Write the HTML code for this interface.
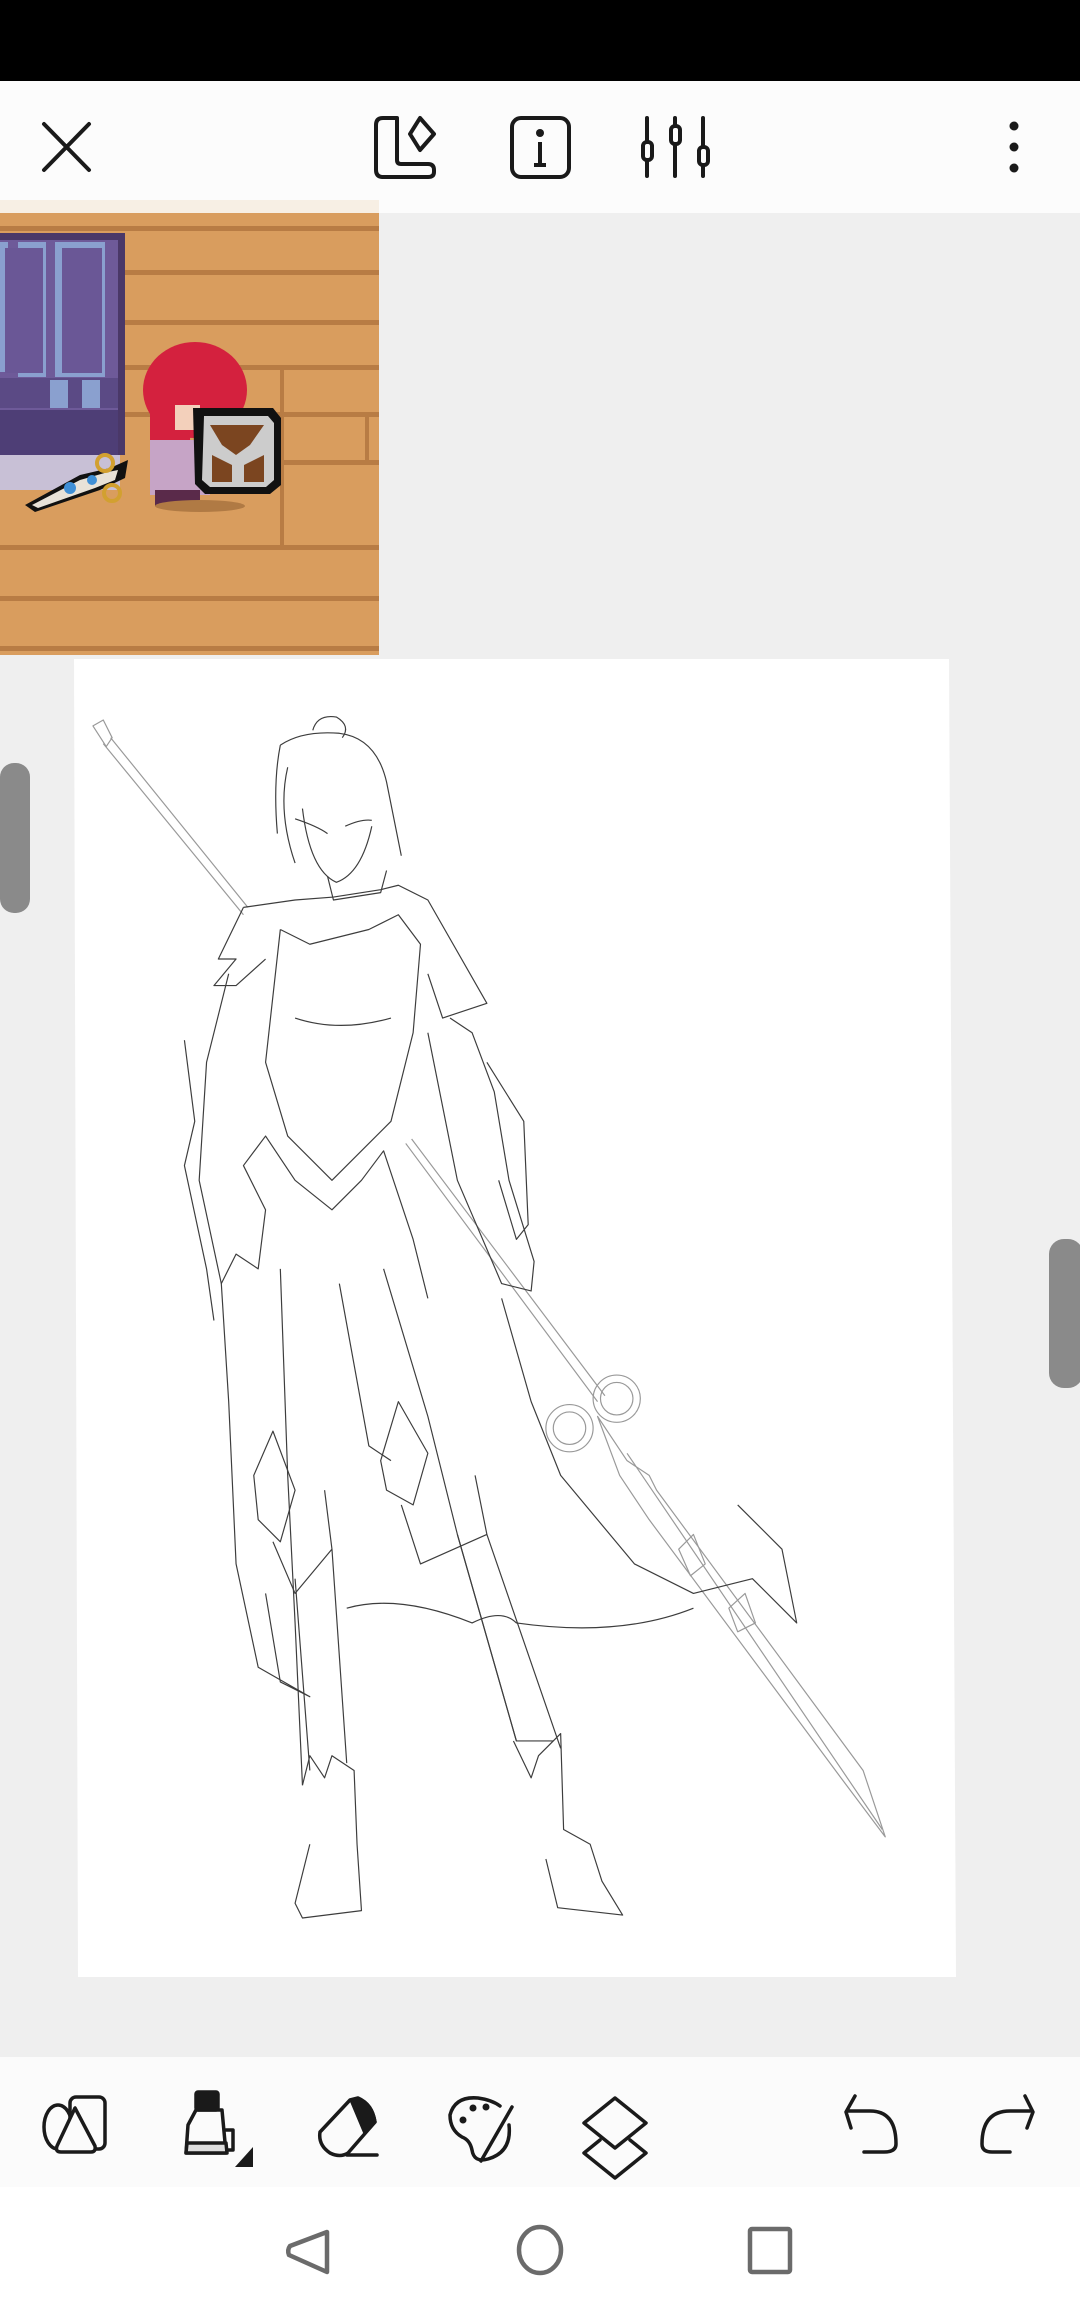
<!DOCTYPE html>
<html><head><meta charset="utf-8"><style>
html,body{margin:0;padding:0;width:1080px;height:2312px;overflow:hidden;background:#efefef;font-family:"Liberation Sans",sans-serif}
.abs{position:absolute}
</style></head><body>
<div class="abs" style="left:0;top:0;width:1080px;height:81px;background:#000"></div>
<div class="abs" style="left:0;top:81px;width:1080px;height:132px;background:#fcfcfc"></div>
<div class="abs" style="left:0;top:2057px;width:1080px;height:130px;background:#fbfbfb"></div>
<div class="abs" style="left:0;top:2187px;width:1080px;height:125px;background:#ffffff"></div>
<svg class="abs" style="left:0;top:0" width="1080" height="2312" viewBox="0 0 1080 2312">
<g fill="none" stroke="#1a1a1a" stroke-width="4" stroke-linecap="round" stroke-linejoin="round">
<path d="M44 124 L89 170 M89 124 L44 170"/>
<path d="M383 118 H397 V160 Q397 164 401 164 H428 Q434 164 434 170 V172 Q434 177 428 177 H383 Q376 177 376 170 V125 Q376 118 383 118 Z"/>
<path d="M420 118 L434 134 L420 150 L410 134 Z"/>
<rect x="512" y="118" width="57" height="59" rx="9"/>
<path d="M647 118 V176 M675 118 V176 M703 118 V176"/>
<rect x="643" y="142" width="9" height="18" rx="4" fill="#fcfcfc"/>
<rect x="671" y="126" width="9" height="18" rx="4" fill="#fcfcfc"/>
<rect x="699" y="147" width="9" height="18" rx="4" fill="#fcfcfc"/>
</g>
<circle cx="540" cy="133" r="4" fill="#1a1a1a"/><path d="M540 142 V164 M534 165 H546" stroke="#1a1a1a" stroke-width="4"/>
<circle cx="1014" cy="126" r="4.5" fill="#1a1a1a"/><circle cx="1014" cy="147" r="4.5" fill="#1a1a1a"/><circle cx="1014" cy="168" r="4.5" fill="#1a1a1a"/>
<rect x="0" y="200" width="379" height="14" fill="#f7efe4"/>
<rect x="0" y="213" width="379" height="442" fill="#d99d5e"/>
<g fill="#b87c44">
<rect x="0" y="226" width="379" height="5"/><rect x="0" y="270" width="379" height="5"/><rect x="0" y="320" width="379" height="5"/>
<rect x="0" y="365" width="379" height="5"/><rect x="125" y="412" width="254" height="5"/><rect x="280" y="460" width="99" height="5"/>
<rect x="0" y="545" width="379" height="5"/><rect x="0" y="596" width="379" height="5"/><rect x="0" y="646" width="379" height="5"/>
<rect x="280" y="370" width="4" height="175"/><rect x="365" y="415" width="4" height="50"/>
</g>
<rect x="0" y="233" width="125" height="222" fill="#4a3868"/>
<rect x="0" y="240" width="118" height="205" fill="#6e5a99"/>
<rect x="0" y="242" width="8" height="130" fill="#8aa0cf"/><rect x="18" y="242" width="28" height="135" fill="#8aa0cf"/><rect x="55" y="242" width="50" height="135" fill="#8aa0cf"/>
<rect x="5" y="248" width="38" height="125" fill="#6a5796"/><rect x="62" y="248" width="40" height="125" fill="#6a5796"/>
<rect x="0" y="378" width="118" height="30" fill="#5b4a85"/><rect x="50" y="380" width="18" height="28" fill="#8aa0cf"/><rect x="82" y="380" width="18" height="28" fill="#8aa0cf"/>
<rect x="0" y="410" width="118" height="45" fill="#4e3e76"/>
<rect x="0" y="455" width="120" height="35" fill="#c8c0d6"/>
<ellipse cx="195" cy="390" rx="52" ry="48" fill="#d4213e"/>
<rect x="150" y="385" width="40" height="70" fill="#d4213e"/>
<rect x="175" y="405" width="25" height="25" fill="#f3d0bb"/>
<rect x="150" y="440" width="60" height="55" fill="#c6a4c6"/>
<rect x="155" y="490" width="45" height="16" fill="#5a2a4a"/>
<ellipse cx="200" cy="506" rx="45" ry="6" fill="#b07a44"/>
<path d="M193 408 L273 408 L281 418 L281 485 L270 494 L205 494 L195 484 Z" fill="#111"/>
<path d="M204 416 L268 416 L274 423 L274 480 L266 487 L210 487 L202 480 Z" fill="#ccc"/>
<path d="M210 425 H264 L250 445 L236 455 L222 445 Z" fill="#7b4520"/>
<path d="M212 455 L232 465 V482 H212 Z M264 455 L244 465 V482 H264 Z" fill="#7b4520"/>
<path d="M25 505 L80 475 L110 468 L128 460 L125 478 L100 490 L35 512 Z" fill="#111"/>
<path d="M32 505 L80 480 L108 472 L118 470 L115 480 L95 488 L38 508 Z" fill="#e8e2d8"/>
<circle cx="70" cy="488" r="6" fill="#3f8fd6"/><circle cx="92" cy="480" r="5" fill="#3f8fd6"/>
<circle cx="105" cy="463" r="8" fill="none" stroke="#d2a030" stroke-width="4"/><circle cx="112" cy="493" r="8" fill="none" stroke="#d2a030" stroke-width="4"/>
<polygon points="74,659 949,659 956,1977 78,1977" fill="#ffffff"/>
<rect x="0" y="763" width="30" height="150" rx="14" fill="#8a8a8a"/>
<rect x="1049" y="1239" width="34" height="149" rx="15" fill="#8a8a8a"/>
<g transform="scale(1.4754)" fill="none" stroke="#3d3d3d" stroke-width="0.8" stroke-linejoin="round">
<g stroke="#999">
<path d="M63 492 L70 488 L76 500 L72 506 Z"/>
<path d="M70 504 L165 620 M75 500 L168 615"/>
<path d="M275 775 L405 950 M279 772 L410 946"/>
<circle cx="386" cy="968" r="16"/><circle cx="386" cy="968" r="11"/>
<circle cx="418" cy="948" r="16"/><circle cx="418" cy="948" r="11"/>
<path d="M405 960 L425 990 L440 1000 L445 1010 L585 1200 L600 1245 L570 1205 L440 1030 L420 1000 Z"/>
<path d="M425 985 L598 1240"/>
<path d="M460 1050 L470 1040 L478 1060 L468 1068 Z M494 1090 L505 1080 L512 1100 L500 1106 Z"/>
</g>
<path d="M212 495 Q215 484 228 486 Q238 492 232 500"/>
<path d="M190 505 Q205 495 230 497 Q255 500 262 530 Q268 560 272 580 M190 505 Q185 530 188 565 M195 520 Q188 550 200 585"/>
<path d="M200 555 Q215 560 222 565 M234 560 Q245 555 252 556"/>
<path d="M205 548 Q210 590 228 598 Q245 592 252 560"/>
<path d="M222 594 L226 610 L258 605 L262 590"/>
<path d="M165 615 L200 610 L226 608 L258 603 L270 600 L290 610 L330 680 L300 690 L290 660"/>
<path d="M165 615 L148 650 L160 650 L145 668 L160 668 L180 650"/>
<path d="M190 630 L210 640 L250 630 L270 620 L285 640 L280 700 L265 760 L225 800 L195 770 L180 720 L190 630"/>
<path d="M200 690 Q230 700 265 690"/>
<path d="M155 660 L140 720 L135 800 L150 870 L160 850 L175 860 L180 820 L165 790 L180 770 L200 800 L225 820 L245 800 L260 780 L280 840 L290 880"/>
<path d="M125 705 L132 760 L125 790 L140 860 L145 895"/>
<path d="M290 700 L310 800 L340 870 L360 875 L362 855 L345 800 L335 740 L320 700 L305 690"/>
<path d="M330 720 L355 760 L358 830 L350 840 L338 800"/>
<path d="M150 870 L155 950 L160 1060 L175 1130 L210 1150 L190 1140 L180 1080"/>
<path d="M190 860 L195 1000 L200 1100 L205 1210"/>
<path d="M230 870 L250 980 L265 990 M260 860 L290 960 L310 1040 L350 1180"/>
<path d="M340 880 L360 950 L380 1000 L430 1060 L470 1080 L510 1070 L540 1100 L530 1050 L500 1020"/>
<path d="M235 1090 Q270 1080 320 1100 Q340 1090 350 1100 Q420 1110 470 1090"/>
<path d="M172 1000 L185 970 L200 1010 L190 1045 L175 1030 Z M185 1045 L200 1080 L225 1050 L220 1010"/>
<path d="M258 990 L270 950 L290 985 L280 1020 L262 1010 Z M272 1020 L285 1060 L330 1040 L322 1000"/>
<path d="M200 1070 L210 1200 M225 1050 L235 1195"/>
<path d="M310 1040 L350 1180 L375 1180 M330 1040 L380 1185"/>
<path d="M205 1210 L210 1190 L220 1205 L225 1190 L240 1200 L242 1250 L245 1295 L205 1300 L200 1290 L210 1250"/>
<path d="M348 1180 L360 1205 L365 1190 L380 1175 L382 1240 L400 1250 L408 1275 L422 1298 L378 1293 L370 1260"/>
</g>
<!-- bottom toolbar icons -->
<g fill="none" stroke="#1a1a1a" stroke-width="3.5" stroke-linejoin="round" stroke-linecap="round">
<ellipse cx="58" cy="2127" rx="14" ry="22"/>
<rect x="70" y="2097" width="35" height="52" rx="6" fill="#fbfbfb"/>
<path d="M75 2108 L57 2146 Q55 2152 61 2152 H91 Q96 2152 95 2146 Z" fill="#fbfbfb"/>
<path d="M196 2110 H222 L226 2153 H186 L188 2125 Z" fill="#fbfbfb"/>
<path d="M226 2130 H233 V2150 H226"/>
<rect x="196" y="2092" width="22" height="18" rx="2" fill="#1a1a1a"/>
<path d="M187 2143 H226 L227 2153 H186 Z" fill="#ddd"/>
<path d="M358 2098 Q372 2104 375 2122 L348 2153 Q340 2158 330 2153 Q318 2145 320 2132 L350 2100 Z"/>
<path d="M360 2100 Q372 2104 375 2122 L365 2133 L352 2102 Z" fill="#1a1a1a"/>
<path d="M347 2155 H377"/>
<path d="M512 2107 L481 2161 M509 2125 Q512 2152 488 2159 Q474 2163 472 2150 Q470 2140 462 2137 Q450 2130 450 2115 Q455 2096 478 2098 Q492 2100 500 2106"/>
<path d="M615 2098 L646 2123 L615 2148 L584 2123 Z" fill="#fbfbfb"/>
<path d="M600 2140 L584 2153 L615 2178 L646 2153 L630 2140"/>
<path d="M855 2096 L846 2112 L851 2128 M848 2111 H870 Q896 2111 896 2144 Q896 2152 884 2152 H864"/>
<path d="M1025 2096 L1033 2112 L1027 2128 M1030 2111 H1010 Q982 2111 982 2144 Q982 2152 992 2152 H1010"/>
</g>
<circle cx="463" cy="2120" r="3.5" fill="#1a1a1a"/><circle cx="473" cy="2108" r="3.5" fill="#1a1a1a"/><circle cx="486" cy="2107" r="3.5" fill="#1a1a1a"/>
<path d="M253 2147 V2167 H235 Z" fill="#1a1a1a"/>
<g fill="none" stroke="#6b6b6b" stroke-width="4.5" stroke-linejoin="round">
<path d="M327 2232 V2272 L289 2255 Q287 2250 290 2246 Z"/>
<ellipse cx="540" cy="2250" rx="21" ry="23"/>
<rect x="750" y="2229" width="40" height="43" rx="2"/>
</g>
</svg>
</body></html>
